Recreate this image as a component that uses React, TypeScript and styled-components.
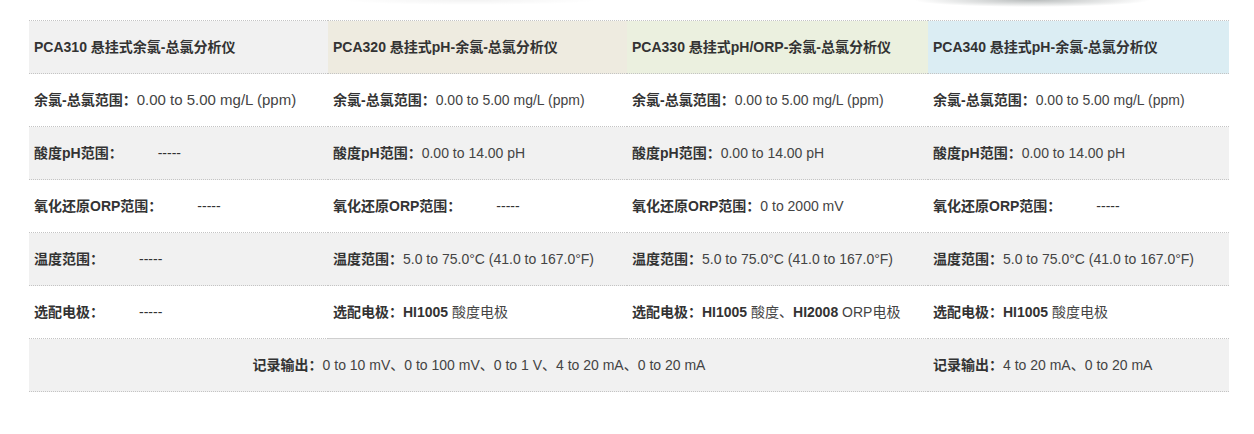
import styled, { createGlobalStyle } from 'styled-components';

const GlobalStyle = createGlobalStyle`
  body {
    margin: 0;
    background: #fff;
    font-family: "Liberation Sans", "Noto Sans CJK SC", sans-serif;
  }
`;

const Page = styled.div`
  width: 1254px;
  height: 434px;
  overflow: hidden;
`;

const ShadowStrip = styled.div`
  height: 20px;
  background:
    radial-gradient(ellipse 118px 7px at 1032px 0, rgba(70, 80, 80, 0.38), rgba(70, 80, 80, 0) 100%),
    radial-gradient(ellipse 130px 5px at 470px 0, rgba(0, 0, 0, 0.05), rgba(0, 0, 0, 0) 100%);
`;

const Table = styled.table`
  margin-left: 29px;
  width: 1200px;
  border-collapse: collapse;
  table-layout: fixed;
  border-top: 1px dotted #c4c4c4;
`;

const Row = styled.tr<{ $shade?: boolean }>`
  background: ${(p) => (p.$shade ? '#f1f1f1' : '#fff')};
`;

const Cell = styled.td<{ $bg?: string; $solid?: boolean; $center?: boolean }>`
  height: 53px;
  padding: 0 4px 2px 5px;
  box-sizing: border-box;
  vertical-align: middle;
  font-size: 14px;
  color: #444;
  white-space: nowrap;
  text-align: ${(p) => (p.$center ? 'center' : 'left')};
  background: ${(p) => p.$bg || 'transparent'};
  border-bottom: 1px ${(p) => (p.$solid ? 'solid #cfcfcf' : 'dotted #c4c4c4')};
`;

const HeadCell = styled(Cell)`
  font-weight: bold;
  color: #333;
`;

const Label = styled.b`
  color: #333;
`;

const Value = styled.span<{ $big?: boolean }>`
  font-size: ${(p) => (p.$big ? '15px' : '14px')};
`;

const Dash = styled.span`
  margin-left: 35px;
  color: #333;
`;

const heads = [
  { text: 'PCA310 悬挂式余氯-总氯分析仪', bg: '#f1f1f1' },
  { text: 'PCA320 悬挂式pH-余氯-总氯分析仪', bg: '#eeebe0' },
  { text: 'PCA330 悬挂式pH/ORP-余氯-总氯分析仪', bg: '#ebf0df' },
  { text: 'PCA340 悬挂式pH-余氯-总氯分析仪', bg: '#dbedf3' },
];

const CHLORINE = '0.00 to 5.00 mg/L (ppm)';
const PH = '0.00 to 14.00 pH';
const TEMP = '5.0 to 75.0°C (41.0 to 167.0°F)';

function Spec({ label, value, big }: { label: string; value?: React.ReactNode; big?: boolean }) {
  return (
    <>
      <Label>{label}：</Label>
      {value === undefined ? <Dash>-----</Dash> : <Value $big={big}>{value}</Value>}
    </>
  );
}

function App() {
  return (
    <Page>
      <GlobalStyle />
      <ShadowStrip />
      <Table>
        <colgroup>
          <col style={{ width: 299 }} />
          <col style={{ width: 299 }} />
          <col style={{ width: 301 }} />
          <col style={{ width: 301 }} />
        </colgroup>
        <tbody>
          <Row>
            {heads.map((h) => (
              <HeadCell key={h.text} $bg={h.bg}>
                {h.text}
              </HeadCell>
            ))}
          </Row>
          <Row>
            <Cell><Spec label="余氯-总氯范围" value={CHLORINE} big /></Cell>
            <Cell><Spec label="余氯-总氯范围" value={CHLORINE} /></Cell>
            <Cell><Spec label="余氯-总氯范围" value={CHLORINE} /></Cell>
            <Cell><Spec label="余氯-总氯范围" value={CHLORINE} /></Cell>
          </Row>
          <Row $shade>
            <Cell><Spec label="酸度pH范围" /></Cell>
            <Cell><Spec label="酸度pH范围" value={PH} /></Cell>
            <Cell><Spec label="酸度pH范围" value={PH} /></Cell>
            <Cell><Spec label="酸度pH范围" value={PH} /></Cell>
          </Row>
          <Row>
            <Cell><Spec label="氧化还原ORP范围" /></Cell>
            <Cell><Spec label="氧化还原ORP范围" /></Cell>
            <Cell><Spec label="氧化还原ORP范围" value="0 to 2000 mV" /></Cell>
            <Cell><Spec label="氧化还原ORP范围" /></Cell>
          </Row>
          <Row $shade>
            <Cell><Spec label="温度范围" /></Cell>
            <Cell><Spec label="温度范围" value={TEMP} /></Cell>
            <Cell><Spec label="温度范围" value={TEMP} /></Cell>
            <Cell><Spec label="温度范围" value={TEMP} /></Cell>
          </Row>
          <Row>
            <Cell><Spec label="选配电极" /></Cell>
            <Cell $solid>
              <Spec label="选配电极" value={<><Label>HI1005</Label> 酸度电极</>} />
            </Cell>
            <Cell>
              <Spec
                label="选配电极"
                value={<><Label>HI1005</Label> 酸度、<Label>HI2008</Label> ORP电极</>}
              />
            </Cell>
            <Cell>
              <Spec label="选配电极" value={<><Label>HI1005</Label> 酸度电极</>} />
            </Cell>
          </Row>
          <Row $shade>
            <Cell colSpan={3} $center>
              <Spec label="记录输出" value="0 to 10 mV、0 to 100 mV、0 to 1 V、4 to 20 mA、0 to 20 mA" />
            </Cell>
            <Cell><Spec label="记录输出" value="4 to 20 mA、0 to 20 mA" /></Cell>
          </Row>
        </tbody>
      </Table>
    </Page>
  );
}

export default App;
